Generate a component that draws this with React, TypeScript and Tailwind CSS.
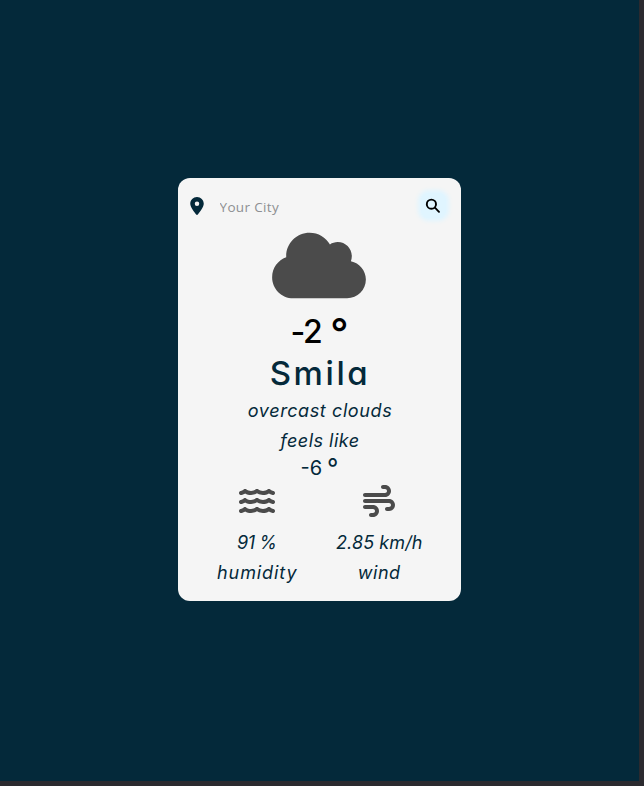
import { FaCloud, FaLocationDot, FaWater, FaWind } from "react-icons/fa6";

const face = "font-['Inter','Open_Sans',sans-serif] [font-feature-settings:'cv11','ss03']";

function SearchIcon() {
  return (
    <svg viewBox="0 0 16 16" className="h-4 w-4" fill="none" stroke="currentColor" strokeWidth="1.9" strokeLinecap="round">
      <circle cx="6.4" cy="6.2" r="4.6" />
      <path d="M9.9 9.7 14 13.8" />
    </svg>
  );
}

export default function App() {
  return (
    <div className={`h-[786px] w-[644px] bg-[#2b2a2f] pr-[5px] pb-[5px] ${face}`}>
      <main className="flex h-full w-full items-start justify-center bg-[#04293a] pt-[178px] pr-px">
        <section className="h-[423px] w-[283px] rounded-[12px] bg-[#f5f5f5] text-[#04293a]">
          <div className="flex h-[55px] items-center pl-[10px] pr-[15px]">
            <FaLocationDot className="h-[18px] w-[18px]" />
            <input
              className="ml-[14px] mt-1 w-[180px] bg-transparent font-['Open_Sans','Noto_Sans',sans-serif] text-[13.5px] tracking-[0.35px] outline-none placeholder:text-[#8d8f92]"
              placeholder="Your City"
            />
            <button className="ml-auto flex h-[25px] w-[25px] items-center justify-center rounded-[8px] bg-[#e0f5ff] text-black shadow-[0_0_4px_3px_#e0f5ff]">
              <SearchIcon />
            </button>
          </div>
          <FaCloud className="mx-auto -mt-[5px] h-[75px] w-[94px] text-[#4b4b4b]" />
          <div className="mt-[10px] flex h-[38px] justify-center pl-px text-[32px] leading-[38px] font-medium text-black">
            <span className="tracking-[-1.5px]">-2</span>
            <span className="ml-[9px] text-[40px] leading-[40px]">°</span>
          </div>
          <h1 className="mt-[2px] pl-[2px] text-center text-[33px] leading-[40px] font-medium tracking-[2.6px]">Smila</h1>
          <p className="mt-[3px] pl-[2px] text-center text-[18px] leading-[30px] tracking-[0.6px] italic">overcast clouds</p>
          <p className="pl-[2px] text-center text-[18px] leading-[30px] tracking-[0.5px] italic">feels like</p>
          <div className="flex h-[24px] justify-center pl-px text-[20px] leading-[24px]">
            <span>-6</span>
            <span className="ml-[5px] text-[25px] leading-[25px]">°</span>
          </div>
          <div className="mt-[3px] flex pl-[18px] pr-[20px] text-center text-[18px] leading-[30px] italic">
            <div className="w-1/2">
              <FaWater className="mx-auto h-[36px] w-[36px] text-[#4b4b4b]" />
              <p className="mt-[9px] tracking-[-0.4px]">91 %</p>
              <p className="pl-px tracking-[0.9px]">humidity</p>
            </div>
            <div className="w-1/2">
              <FaWind className="mx-auto mt-[2px] h-[32px] w-[32px] text-[#4b4b4b]" />
              <p className="mt-[11px] tracking-[0.1px]">2.85 km/h</p>
              <p className="tracking-[0.5px]">wind</p>
            </div>
          </div>
        </section>
      </main>
    </div>
  );
}
